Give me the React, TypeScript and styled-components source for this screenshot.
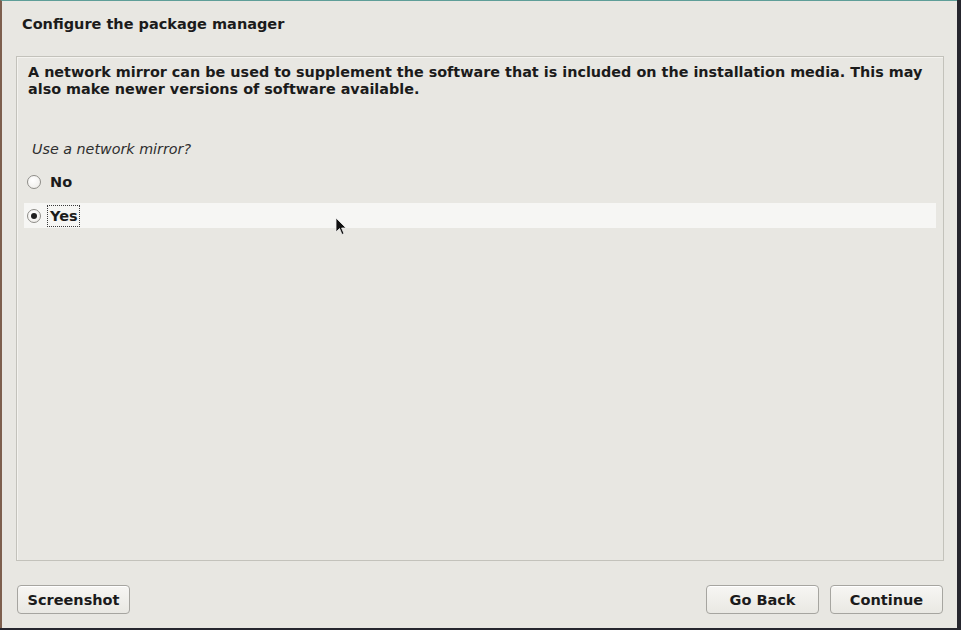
import React from "react";
import styled, { createGlobalStyle } from "styled-components";

const Global = createGlobalStyle`
  html, body { margin: 0; padding: 0; background: #26262e; }
  body { font-family: "DejaVu Sans", "Liberation Sans", sans-serif; }
`;

const Screen = styled.div`
  width: 961px;
  height: 630px;
  box-sizing: border-box;
  padding: 0 4px 2px 0;
  background: #26262e;
  display: flex;
  overflow: hidden;
`;

const Window = styled.div`
  position: relative;
  flex: 1;
  display: flex;
  flex-direction: column;
  box-sizing: border-box;
  background: #e8e7e2;
  border-top: 1px solid #5e9e98;
  border-left: 2px solid #7d5f4e;
  padding: 0 13px 14px 14px;
`;

const Title = styled.h1`
  margin: 0;
  height: 55px;
  display: flex;
  align-items: flex-start;
  padding: 14px 0 0 6px;
  box-sizing: border-box;
  font-size: 14.5px;
  line-height: 18px;
  font-weight: bold;
  color: #1b1b1b;
`;

const Panel = styled.section`
  flex: 1;
  border: 1px solid #c3c2bb;
  box-shadow: inset 1px 1px 0 #f4f3ef;
  padding: 7px 11px 0 11px;
  display: flex;
  flex-direction: column;
`;

const Description = styled.p`
  margin: 0;
  font-size: 14.38px;
  line-height: 17px;
  font-weight: bold;
  color: #1b1b1b;
`;

const Question = styled.p`
  margin: 42px 0 0 4px;
  font-size: 14.3px;
  line-height: 18px;
  font-style: italic;
  color: #2e2e2e;
`;

const Choices = styled.ul`
  list-style: none;
  margin: 11px -4px 0 -4px;
  padding: 0;
  display: flex;
  flex-direction: column;
  gap: 9px;
`;

const Choice = styled.li<{ $active?: boolean }>`
  height: 25px;
  display: flex;
  align-items: center;
  padding-left: 3px;
  background: ${(p) => (p.$active ? "#f6f6f4" : "transparent")};
`;

const Radio = styled.span<{ $checked?: boolean }>`
  width: 14px;
  height: 14px;
  box-sizing: border-box;
  border-radius: 50%;
  border: 1px solid #8e8d88;
  background: radial-gradient(circle at 40% 35%, #ffffff, #eceae6);
  display: flex;
  align-items: center;
  justify-content: center;
  margin-right: 6px;
  &::after {
    content: "";
    width: 6px;
    height: 6px;
    border-radius: 50%;
    background: #1e1e1e;
    display: ${(p) => (p.$checked ? "block" : "none")};
  }
`;

const Label = styled.span<{ $focused?: boolean }>`
  font-size: 14.5px;
  font-weight: bold;
  color: #1b1b1b;
  line-height: 18px;
  padding: 1px 1px 1px 2px;
  border: 1px dotted ${(p) => (p.$focused ? "#3a3a3a" : "transparent")};
`;

const ButtonBar = styled.footer`
  display: flex;
  align-items: center;
  margin-top: 24px;
  padding: 0 1px 0 1px;
  gap: 11px;
`;

const Spacer = styled.div`
  flex: 1;
`;

const Button = styled.button`
  width: 113px;
  height: 29px;
  box-sizing: border-box;
  border: 1px solid #a6a5a0;
  border-radius: 4px;
  background: linear-gradient(#f7f6f3, #e9e8e3);
  box-shadow: inset 0 1px 0 #ffffff;
  font-family: "DejaVu Sans", "Liberation Sans", sans-serif;
  font-size: 14.5px;
  font-weight: bold;
  color: #1b1b1b;
  padding: 0;
`;

const Pointer = styled.svg`
  position: absolute;
  left: 333px;
  top: 216px;
  width: 12px;
  height: 20px;
`;

export default function App() {
  return (
    <>
      <Global />
      <Screen>
        <Window>
          <Title>Configure the package manager</Title>
          <Panel>
            <Description>
              A network mirror can be used to supplement the software that is
              included on the installation media. This may also make newer
              versions of software available.
            </Description>
            <Question>Use a network mirror?</Question>
            <Choices>
              <Choice>
                <Radio />
                <Label>No</Label>
              </Choice>
              <Choice $active>
                <Radio $checked />
                <Label $focused>Yes</Label>
              </Choice>
            </Choices>
          </Panel>
          <ButtonBar>
            <Button>Screenshot</Button>
            <Spacer />
            <Button>Go Back</Button>
            <Button>Continue</Button>
          </ButtonBar>
          <Pointer viewBox="0 0 12 20">
            <path
              d="M1 1 L1 15 L4.5 11.5 L7 17.5 L9 16.6 L6.6 11 L11 11 Z"
              fill="#111"
              stroke="#f0f0f0"
              strokeWidth="0.8"
            />
          </Pointer>
        </Window>
      </Screen>
    </>
  );
}
